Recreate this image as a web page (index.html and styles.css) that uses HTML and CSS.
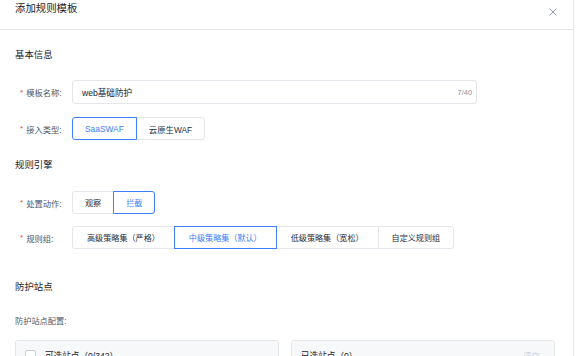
FILE: index.html
```html
<!DOCTYPE html>
<html>
<head>
<meta charset="utf-8">
<link rel="stylesheet" href="styles.css">
</head>
<body>
<div class="drawer">
  <div class="header">
    <span class="title">添加规则模板</span>
    <svg class="close" width="8" height="8" viewBox="0 0 8 8"><path d="M0.5 0.5 L7.5 7.5 M7.5 0.5 L0.5 7.5" stroke="#86909c" stroke-width="0.9" fill="none"/></svg>
  </div>
  <div class="content">
    <div class="section s1">基本信息</div>
    <div class="row r-name">
      <div class="label"><span class="star">*</span>模板名称:</div>
      <div class="input"><span class="val">web基础防护</span><span class="count">7/40</span></div>
    </div>
    <div class="row r-type">
      <div class="label"><span class="star">*</span>接入类型:</div>
      <div class="group">
        <span class="btn on">SaaSWAF</span><span class="btn">云原生WAF</span>
      </div>
    </div>
    <div class="section s2">规则引擎</div>
    <div class="row r-act">
      <div class="label"><span class="star">*</span>处置动作:</div>
      <div class="group">
        <span class="btn">观察</span><span class="btn on">拦截</span>
      </div>
    </div>
    <div class="row r-grp">
      <div class="label"><span class="star">*</span>规则组:</div>
      <div class="group">
        <span class="btn">高级策略集（严格）</span><span class="btn on">中级策略集（默认）</span><span class="btn">低级策略集（宽松）</span><span class="btn last">自定义规则组</span>
      </div>
    </div>
    <div class="section s3">防护站点</div>
    <div class="sublabel">防护站点配置:</div>
    <div class="transfer">
      <div class="panel">
        <div class="phead"><span class="cb"></span><span class="ptitle">可选站点（0/342）</span></div>
      </div>
      <div class="panel">
        <div class="phead"><span class="ptitle">已选站点（0）</span><span class="clear">清空</span></div>
      </div>
    </div>
  </div>
</div>
</body>
</html>
```
FILE: styles.css
```css
* { box-sizing: border-box; }
html, body { margin: 0; padding: 0; background: #fff; }
body {
  font-family: "Liberation Sans", "Noto Sans CJK SC", sans-serif;
  font-size: 8px;
  color: #1d2129;
  overflow: hidden;
  height: 356px;
}
.drawer {
  width: 574px;
  height: 356px;
  border-right: 1px solid #e5e6eb;
}
.header {
  height: 30px;
  border-bottom: 1px solid #e5e6eb;
  display: flex;
  align-items: flex-start;
  justify-content: space-between;
  padding: 2px 15px 0 15px;
}
.title {
  font-size: 10.4px;
  line-height: 14px;
  color: #1d2129;
}
.close { margin-top: 6px; margin-right: 1px; }
.content { padding: 0 15px; }
.section {
  font-size: 9.4px;
  line-height: 12px;
  color: #1d2129;
}
.s1 { margin-top: 19px; }
.s2 { margin-top: 19px; }
.s3 { margin-top: 32px; }
.row { display: flex; align-items: center; }
.r-name { margin-top: 19px; height: 24px; }
.r-type { margin-top: 13px; height: 23px; }
.r-act { margin-top: 20px; height: 23px; }
.r-grp { margin-top: 12px; height: 23px; }
.label {
  width: 57px;
  padding-left: 5px;
  color: #4e5969;
  font-size: 8.3px;
  display: flex;
  align-items: center;
}
.star { color: #f53f3f; margin-right: 3px; font-size: 8px; }
.input {
  width: 405px;
  height: 24px;
  border: 1px solid #e5e6eb;
  border-radius: 3px;
  display: flex;
  align-items: center;
  justify-content: space-between;
  padding: 0 4px 0 9px;
}
.val { font-size: 8.6px; color: #1d2129; }
.count { font-size: 7.4px; color: #86909c; }
.group { display: flex; height: 23px; }
.btn {
  display: flex;
  align-items: center;
  justify-content: center;
  height: 23px;
  padding: 0 14px;
  border: 1px solid #e5e6eb;
  margin-left: -1px;
  background: #fff;
  color: #272e3b;
  font-size: 8.1px;
  position: relative;
}
.btn:first-child { margin-left: 0; border-radius: 3px 0 0 3px; }
.btn:last-child { border-radius: 0 3px 3px 0; }
.btn.on { border-color: #3c7eff; color: #3c7eff; z-index: 1; }
.r-type .btn { padding: 0 12px; font-size: 8.4px; }
.r-act .btn { padding: 0 12px; }
.r-grp .btn { padding: 0 14px; }
.r-grp .btn.last { padding: 0 13px; }
.sublabel {
  margin-top: 23px;
  font-size: 8.2px;
  line-height: 12px;
  color: #4e5969;
}
.transfer {
  margin-top: 12px;
  display: flex;
  gap: 12px;
}
.panel {
  width: 264px;
  height: 60px;
  border: 1px solid #e5e6eb;
  border-radius: 3px;
  overflow: hidden;
}
.phead {
  height: 24px;
  background: #f7f8fa;
  display: flex;
  align-items: center;
  padding: 4px 10px 0 9px;
  font-size: 8.6px;
  color: #1d2129;
}
.cb {
  width: 11px;
  height: 11px;
  border: 1px solid #c9cdd4;
  border-radius: 2px;
  background: #fff;
  margin-right: 9px;
}
.panel:last-child .phead { justify-content: space-between; padding-left: 9px; padding-right: 14px; }
.clear { color: #c9cdd4; font-size: 8.4px; }
```
